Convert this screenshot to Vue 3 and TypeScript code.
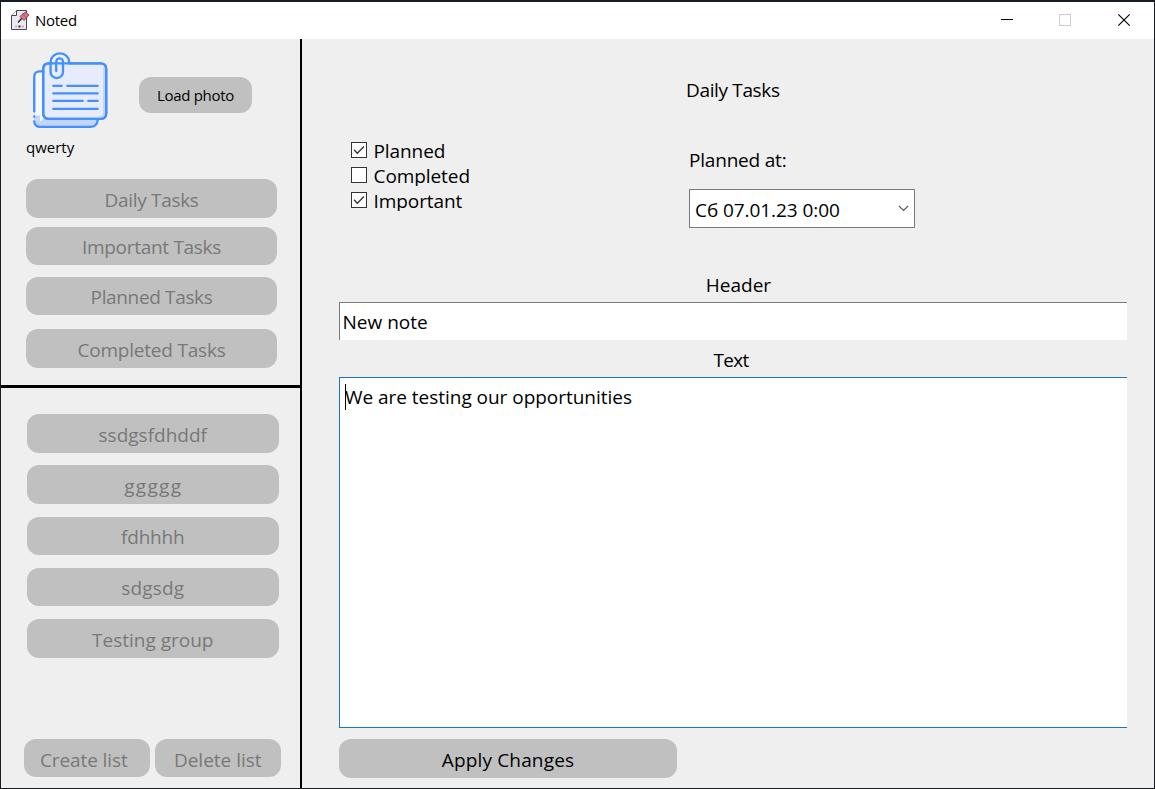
<script setup lang="ts">
import { ref } from 'vue'

interface Item { label: string; cls: string }

const filters: Item[] = [
  { label: 'Daily Tasks', cls: 'daily' },
  { label: 'Important Tasks', cls: 'important' },
  { label: 'Planned Tasks', cls: 'planned' },
  { label: 'Completed Tasks', cls: 'completed' },
]
const groups: Item[] = [
  { label: 'ssdgsfdhddf', cls: 'g1' },
  { label: 'ggggg', cls: 'g2' },
  { label: 'fdhhhh', cls: 'g3' },
  { label: 'sdgsdg', cls: 'g4' },
  { label: 'Testing group', cls: 'g5' },
]
const flags = ref([
  { label: 'Planned', on: true },
  { label: 'Completed', on: false },
  { label: 'Important', on: true },
])
</script>

<template>
  <div class="window">
    <header class="titlebar">
      <svg class="app-icon" width="20" height="22" viewBox="0 0 20 22">
        <path d="M6.5 1.5H16.5V20.5H1.5V6.5Z" fill="#e9eaf4" stroke="#45464f" />
        <path d="M6.5 1.5V6.5H1.5" fill="#fff" stroke="#45464f" />
        <path d="M8 13.500L12 9" stroke="#33333b" stroke-width="1.600" />
        <path d="M10 7.500L12 5.500L15.500 3L19 6L16 9.300L14 11.500Z" fill="#ee6d85" stroke="#5b3640" stroke-width=".8" />
        <path d="M13 5.300L16.500 8.700" stroke="#a8405a" stroke-width=".8" />
        <path d="M5 17.500H7.500M11.500 17.500H14" stroke="#f0a2b2" stroke-width="2" />
        <path d="M8.500 17.500H10.500" stroke="#33333b" stroke-width="2" />
      </svg>
      <span class="title">Noted</span>
      <svg class="controls" width="132" height="16" viewBox="0 0 132 16" shape-rendering="crispEdges">
        <path d="M1 7.500H13" stroke="#000" fill="none" />
        <rect x="59.500" y="2.500" width="11" height="11" fill="none" stroke="#ccc" />
        <path d="M118.300 2.300L129.700 13.700M129.700 2.300L118.300 13.700" stroke="#000" stroke-width="1.150" fill="none" shape-rendering="auto" />
      </svg>
    </header>

    <div class="body">
      <aside class="sidebar">
        <section class="upper">
          <div class="profile">
            <svg class="avatar" width="76" height="78" viewBox="0.8 0.6 76 78" fill="none" stroke="#4490fd" stroke-width="2.300" stroke-linecap="round">
              <path d="M11 20H7Q2 20 2 25V70Q2 76 8 76H58Q65 76 66 68L11 66Z" fill="#c4d5fa" stroke="none" />
              <path d="M11 20H7Q3 20 3 26V64H8V70L11 68Z" fill="#f5f8ff" stroke="none" />
              <path d="M10 20H7.500Q2 20 2 25.500V60M2 65V65.500M2 70Q2.500 75.500 8 75.500H58Q64.500 75.500 65.500 69" />
              <rect x="11" y="12" width="63" height="55.500" rx="5.500" fill="#e6ecfb" />
              <path d="M72 17V61Q72 66 67 66" stroke="#c4d5fa" />
              <path d="M11 17V62Q11 67.500 16.500 67.500H68.500Q74 67.500 74 62V17.500Q74 12 68.500 12H38M11 17Q11 12 16.500 12H18.500" />
              <path d="M37 12V10.500A9.300 8.500 0 0 0 18.400 10.500V20.500A6.200 6.200 0 0 0 30.800 20.500V10.500A3.400 3.600 0 0 0 24 10.500V19.500" stroke-width="2.300" />
              <path d="M21 34.500H29.500M35 34.500H65.500M21 42H65.500M21 49.500H50.500M56 49.500H65.500M21 57.500H65.500" stroke-width="2.200" />
            </svg>
            <button class="btn load">Load photo</button>
          </div>
          <div class="user">qwerty</div>
          <nav class="filters">
            <button v-for="f in filters" :key="f.label" class="btn muted" :class="f.cls">{{ f.label }}</button>
          </nav>
        </section>
        <section class="lower">
          <nav class="groups">
            <button v-for="g in groups" :key="g.label" class="btn muted" :class="g.cls">{{ g.label }}</button>
          </nav>
          <div class="actions">
            <button class="btn muted create">Create list</button>
            <button class="btn muted delete">Delete list</button>
          </div>
        </section>
      </aside>

      <main class="editor">
        <h1 class="heading">Daily Tasks</h1>
        <div class="options">
          <div class="flags">
            <div v-for="f in flags" :key="f.label" class="flag" @click="f.on = !f.on">
              <svg width="16" height="16" viewBox="0 0 16 16">
                <rect x=".5" y=".5" width="15" height="15" fill="#fff" stroke="#333" />
                <path v-if="f.on" d="M3 7.800L6.300 11.200L13 4.500" fill="none" stroke="#333" stroke-width="1.300" />
              </svg>
              <span>{{ f.label }}</span>
            </div>
          </div>
          <div class="schedule">
            <div class="schedule-label">Planned at:</div>
            <div class="date">
              <span>Сб 07.01.23 0:00</span>
              <svg width="11" height="7" viewBox="0 0 11 7"><path d="M.8 .8L5.500 5.500L10.200 .8" fill="none" stroke="#555" stroke-width="1.200" /></svg>
            </div>
          </div>
        </div>
        <div class="caption header-caption">Header</div>
        <div class="field"><span>New note</span></div>
        <div class="caption text-caption">Text</div>
        <div class="area"><i class="caret"></i><span>We are testing our opportunities</span></div>
        <button class="btn apply">Apply Changes</button>
      </main>
    </div>
  </div>
</template>

<style>
body { margin: 0; overflow: hidden; }
</style>

<style scoped>
.window {
  box-sizing: border-box;
  width: 1155px;
  height: 789px;
  display: flex;
  flex-direction: column;
  background: #efefef;
  border: 1px solid #1b1c22;
  border-top: 2px solid #151b27;
  font-family: "Open Sans", "Noto Sans", sans-serif;
  font-size: 19px;
  line-height: 26px;
  color: #000;
  white-space: nowrap;
}
.titlebar { height: 37px; flex: none; display: flex; align-items: center; background: #fff; }
.app-icon { margin: -2px 0 0 9px; }
.title { margin: -2px 0 0 5px; font-size: 15px; letter-spacing: -.3px; }
.controls { margin: -2px 22px 0 auto; }
.body { flex: 1; display: flex; min-height: 0; }
.sidebar { width: 299px; flex: none; border-right: 2px solid #000; display: flex; flex-direction: column; }
.upper { height: 346px; border-bottom: 3px solid #000; }
.lower { flex: 1; }
.profile { display: flex; padding: 13px 0 0 32px; height: 77px; }
.btn {
  display: block;
  box-sizing: border-box;
  margin: 0;
  padding: 3px 0 0;
  border: 0;
  border-radius: 12px;
  background: #c0c0c0;
  font: inherit;
  color: #000;
  height: 38.500px;
  text-align: center;
}
.muted { color: #787878; }
.load { width: 113px; height: 36px; margin: 25px 0 0 30px; font-size: 15px; padding: 0 0 1px; letter-spacing: -.3px; }
.user { margin: 6px 0 0 25px; font-size: 15px; line-height: 24px; }
.filters { margin: 20px 0 0 25px; width: 251px; }
.filters .daily { letter-spacing: -.300px; }
.filters .important { margin-top: 9px; letter-spacing: -.300px; }
.filters .planned { margin-top: 11.500px; letter-spacing: -.350px; }
.filters .completed { margin-top: 14px; padding-top: 4px; letter-spacing: -.200px; }
.groups { margin: 26px 0 0 26px; width: 251.500px; display: flex; flex-direction: column; gap: 12.800px; }
.groups .g2 { letter-spacing: 1.300px; padding-left: 1px; }
.groups .g3, .groups .g4 { padding-top: 2px; }
.groups .g3 { letter-spacing: -.200px; }
.groups .g4 { letter-spacing: .200px; }
.filters .btn, .groups .btn { width: 100%; }
.actions { display: flex; gap: 5.500px; margin: 81px 0 0 23px; }
.actions .btn { width: 125.500px; padding-top: 4px; }
.actions .create { padding-right: 6px; letter-spacing: -.100px; }
.editor { flex: 1; padding-left: 37px; }
.heading { margin: 38px 0 0 347px; font-size: 19px; font-weight: 400; line-height: 26px; letter-spacing: -.350px; }
.options { display: flex; height: 125px; margin-top: 36px; }
.flags { width: 338px; padding-left: 12px; box-sizing: border-box; }
.flag { display: flex; height: 25px; }
.flag svg { margin-top: 3px; margin-right: 6.500px; }
.flag span { line-height: 25px; height: 22px; overflow: hidden; letter-spacing: -.080px; }
.schedule { margin-left: 12px; }
.schedule-label { margin-top: 8px; letter-spacing: -.200px; }
.date {
  box-sizing: border-box;
  width: 226px;
  height: 39px;
  margin-top: 16px;
  padding: 3px 5px 0;
  border: 1px solid #7a7a7a;
  background: #fff;
  display: flex;
  align-items: center;
  justify-content: space-between;
}
.date span { letter-spacing: -.070px; }
.date svg { margin-top: -4px; }
.caption { width: 799px; text-align: center; }
.header-caption { margin-top: 8px; }
.text-caption { width: 784px; margin-top: 7px; letter-spacing: -.700px; }
.field {
  box-sizing: border-box;
  width: 788px;
  height: 38px;
  margin-top: 4px;
  padding: 6px 2.500px;
  background: #fff;
  border: solid #7a7a7a;
  border-width: 1px 0 0 1px;
}
.area {
  box-sizing: border-box;
  width: 788px;
  height: 351px;
  margin-top: 4px;
  padding: 6px 5px;
  background: #fff;
  border: solid #1874c4;
  border-width: 1px 0 1px 1px;
  display: flex;
}
.area span { letter-spacing: -.030px; }
.caret { width: 1px; height: 26px; background: #000; margin-right: -1px; }
.apply { width: 338px; margin-top: 11px; letter-spacing: .150px; }
</style>
